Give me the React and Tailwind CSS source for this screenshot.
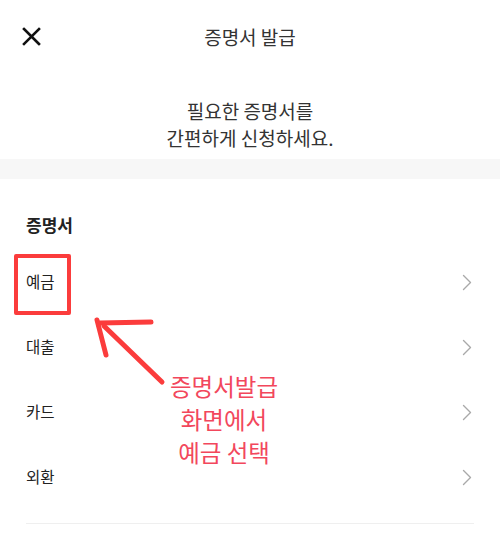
import React from "react";

const font = { fontFamily: '"Noto Sans CJK KR", "Noto Sans", sans-serif' };

function Chevron() {
  return (
    <svg width="10" height="17" viewBox="0 0 10 17" fill="none">
      <path d="M1.5 1.5L8.5 8.5L1.5 15.5" stroke="#a9a9a9" strokeWidth="1.4" strokeLinecap="round" strokeLinejoin="round" />
    </svg>
  );
}

const items = ["예금", "대출", "카드", "외환"];

export default function App() {
  return (
    <div className="relative w-[500px] h-[542px] bg-white overflow-hidden" style={font}>
      <div className="relative h-[74px] flex items-center justify-center">
        <svg className="absolute left-[22px] top-[27px]" width="19" height="19" viewBox="0 0 19 19">
          <path d="M2 2L17 17M17 2L2 17" stroke="#111" strokeWidth="2.6" strokeLinecap="square" />
        </svg>
        <span className="text-[19px] text-[#333] leading-[24px]">증명서 발급</span>
      </div>
      <div className="pt-[23px] pb-[8px] text-center text-[19px] leading-[27px] text-[#333]">
        <div>필요한 증명서를</div>
        <div>간편하게 신청하세요.</div>
      </div>
      <div className="h-[20px] bg-[#f7f7f7]" />
      <div className="px-[26px] pt-[34px]">
        <div className="text-[17px] font-bold leading-[24px] text-[#222]">증명서</div>
        <div className="mt-[12.5px]">
          {items.map((t) => (
            <div key={t} className="h-[65px] flex items-center justify-between">
              <span className="text-[15.5px] text-[#222]">{t}</span>
              <span className="mr-[2px]"><Chevron /></span>
            </div>
          ))}
        </div>
        <div className="mt-[13px] h-px bg-[#efefef]" />
      </div>

      {/* annotation overlays */}
      <div className="absolute left-[14px] top-[254px] w-[57px] h-[61px] border-[4px] border-[#fb3c3c] rounded-[2px]" />
      <svg className="absolute left-0 top-0 pointer-events-none" width="500" height="542" viewBox="0 0 500 542">
        <g stroke="#fb3c3c" strokeWidth="5" strokeLinecap="round" fill="none">
          <path d="M97 320L106 355" />
          <path d="M100 323L151 322" />
          <path d="M104 326L162 382" />
        </g>
      </svg>
      <div className="absolute left-[144px] w-[160px] top-[370px] text-center text-[23.5px] leading-[33px] text-[#f2475c]">
        <div>증명서발급</div>
        <div>화면에서</div>
        <div>예금 선택</div>
      </div>
    </div>
  );
}
